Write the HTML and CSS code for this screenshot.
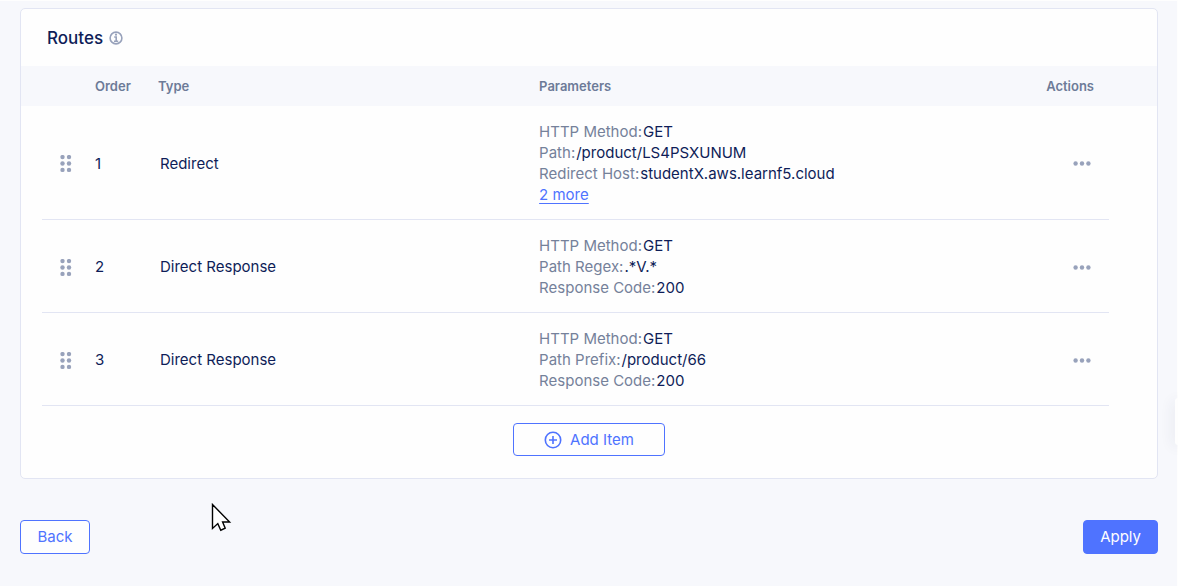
FILE: index.html
```html
<!DOCTYPE html>
<html lang="en">
<head>
<meta charset="utf-8">
<title>Routes</title>
<link rel="stylesheet" href="styles.css">
</head>
<body>
<svg class="defs" width="0" height="0" aria-hidden="true">
  <symbol id="grip" viewBox="0 0 12 18"><circle cx="2.5" cy="2.1" r="2.2"/><circle cx="9" cy="2.1" r="2.2"/><circle cx="2.5" cy="8.5" r="2.2"/><circle cx="9" cy="8.5" r="2.2"/><circle cx="2.5" cy="14.9" r="2.2"/><circle cx="9" cy="14.9" r="2.2"/></symbol>
  <symbol id="dots" viewBox="0 0 18 6"><circle cx="2.6" cy="2.5" r="2.2"/><circle cx="9" cy="2.5" r="2.2"/><circle cx="15.4" cy="2.5" r="2.2"/></symbol>
</svg>
<main class="page">
  <section class="panel">
    <header class="panel-header">
      <h1 class="title">Routes</h1>
      <svg class="info" width="14" height="14" viewBox="0 0 14 14" role="img" aria-label="Information"><circle cx="7" cy="7" r="5.9" fill="none" stroke="currentColor" stroke-width="1.6"/><path d="M5.2 6h2v4M5 10.2h4.2" fill="none" stroke="currentColor" stroke-width="1.6"/><circle cx="7" cy="3.7" r="1.1" fill="currentColor"/></svg>
    </header>
    <div class="table-wrap">
      <table class="routes">
        <thead>
          <tr>
            <th class="col-grip"></th>
            <th class="col-order">Order</th>
            <th class="col-type">Type</th>
            <th class="col-params">Parameters</th>
            <th class="col-actions">Actions</th>
          </tr>
        </thead>
        <tbody>
          <tr>
            <td class="col-grip"><button class="icon-button" aria-label="Move route 1"><svg width="12" height="18"><use href="#grip"/></svg></button></td>
            <td class="col-order">1</td>
            <td class="col-type">Redirect</td>
            <td class="col-params">
              <div class="param"><span class="label">HTTP Method:</span><span>GET</span></div>
              <div class="param"><span class="label">Path:</span><span>/product/LS4PSXUNUM</span></div>
              <div class="param"><span class="label">Redirect Host:</span><span>studentX.aws.learnf5.cloud</span></div>
              <div class="param"><a class="more" href="#">2 more</a></div>
            </td>
            <td class="col-actions"><button class="icon-button" aria-label="Actions for route 1"><svg width="18" height="6"><use href="#dots"/></svg></button></td>
          </tr>
          <tr>
            <td class="col-grip"><button class="icon-button" aria-label="Move route 2"><svg width="12" height="18"><use href="#grip"/></svg></button></td>
            <td class="col-order">2</td>
            <td class="col-type">Direct Response</td>
            <td class="col-params">
              <div class="param"><span class="label">HTTP Method:</span><span>GET</span></div>
              <div class="param"><span class="label">Path Regex:</span><span>.*V.*</span></div>
              <div class="param"><span class="label">Response Code:</span><span>200</span></div>
            </td>
            <td class="col-actions"><button class="icon-button" aria-label="Actions for route 2"><svg width="18" height="6"><use href="#dots"/></svg></button></td>
          </tr>
          <tr>
            <td class="col-grip"><button class="icon-button" aria-label="Move route 3"><svg width="12" height="18"><use href="#grip"/></svg></button></td>
            <td class="col-order">3</td>
            <td class="col-type">Direct Response</td>
            <td class="col-params">
              <div class="param"><span class="label">HTTP Method:</span><span>GET</span></div>
              <div class="param"><span class="label">Path Prefix:</span><span>/product/66</span></div>
              <div class="param"><span class="label">Response Code:</span><span>200</span></div>
            </td>
            <td class="col-actions"><button class="icon-button" aria-label="Actions for route 3"><svg width="18" height="6"><use href="#dots"/></svg></button></td>
          </tr>
        </tbody>
      </table>
    </div>
    <div class="panel-footer">
      <button class="button button-add"><svg width="18" height="18" viewBox="0 0 18 18" fill="none" stroke="currentColor" stroke-width="1.6" aria-hidden="true"><circle cx="9" cy="9" r="7.7"/><path d="M9 5v8M5 9h8"/></svg>Add Item</button>
    </div>
  </section>
  <footer class="page-footer">
    <button class="button">Back</button>
    <button class="button button-primary">Apply</button>
  </footer>
</main>
<div class="side-tab"></div>
<svg class="cursor" width="21" height="29" viewBox="0 0 21 29" aria-hidden="true"><path d="M1.5 1.5V25.5L6.8 20.6L9.8 27.2L14.2 25.2L11.6 19H18.6Z" fill="#fff" stroke="#000" stroke-width="1.4"/></svg>
</body>
</html>
```
FILE: styles.css
```css
* { box-sizing: border-box; }
body {
  margin: 0;
  min-height: 100vh;
  overflow-x: hidden;
  background: #f7f8fc;
  border-top: 1px solid #fefefe;
  border-right: 1px solid #fefefe;
  color: #0e1d58;
  font: 15px/21px Inter, "Liberation Sans", sans-serif;
}
.defs { position: absolute; }
.page { padding: 7px 19px 32px 20px; }
.panel {
  background: #fefefe;
  border: 1px solid #e2e5f3;
  border-radius: 5px;
}
.panel-header {
  display: flex;
  align-items: center;
  gap: 6px;
  height: 57px;
  padding: 0 26px;
}
.title { margin: 0; font-size: 17px; font-weight: 500; line-height: 24px; }
.info { color: #98a2bb; }
.table-wrap { padding: 0 48px 0 21px; overflow: hidden; }
.routes { width: 100%; border-collapse: separate; border-spacing: 0; table-layout: fixed; }
.routes th {
  height: 40px;
  padding: 0;
  background: #f7f8fc;
  color: #6d7b98;
  font-size: 13px;
  font-weight: 600;
  text-align: left;
}
.routes th:first-child { box-shadow: -21px 0 #f7f8fc; }
.routes th:last-child { box-shadow: 48px 0 #f7f8fc; }
.routes td { padding: 15px 0 14px; border-bottom: 1px solid #e2e5f3; }
.col-grip { width: 51px; }
.col-order { width: 62px; }
.routes .col-order { padding-left: 2px; }
.col-type { width: 36%; }
.routes th.col-type { padding-left: 3px; }
.routes td.col-type { padding-left: 5px; }
.routes .col-grip { padding-left: 18px; }
.col-actions { width: 100px; }
.routes .col-actions { padding-right: 15px; text-align: right; }
.routes td.col-actions { padding-right: 18px; }
.param { display: flex; gap: 1px; }
.label { color: #75819a; }
.more {
  color: #4f73ff;
  text-underline-offset: 3px;
}
.icon-button {
  display: inline-flex;
  padding: 0;
  border: 0;
  background: none;
  color: #98a2bb;
  vertical-align: middle;
}
.icon-button svg { fill: currentColor; }
.panel-footer { display: flex; justify-content: center; padding: 17px 0 22px; }
.button {
  display: inline-flex;
  align-items: center;
  justify-content: center;
  gap: 8px;
  min-width: 70px;
  height: 34px;
  padding: 0 16px 1px;
  border: 1px solid #4f73ff;
  border-radius: 4px;
  background: #fefefe;
  color: #4f73ff;
  font: inherit;
}
.button-add { padding: 0 30px; height: 33px; }
.button-primary { background: #4f73ff; color: #fefefe; }
.page-footer { display: flex; justify-content: space-between; padding-top: 41px; }
.side-tab {
  position: absolute;
  top: 398px;
  right: 0;
  width: 3px;
  height: 47px;
  border-radius: 3px 0 0 3px;
  background: #fefefe;
  box-shadow: 0 2px 14px rgba(40, 50, 90, 0.2);
}
.cursor { position: absolute; top: 503px; left: 211px; }
```
